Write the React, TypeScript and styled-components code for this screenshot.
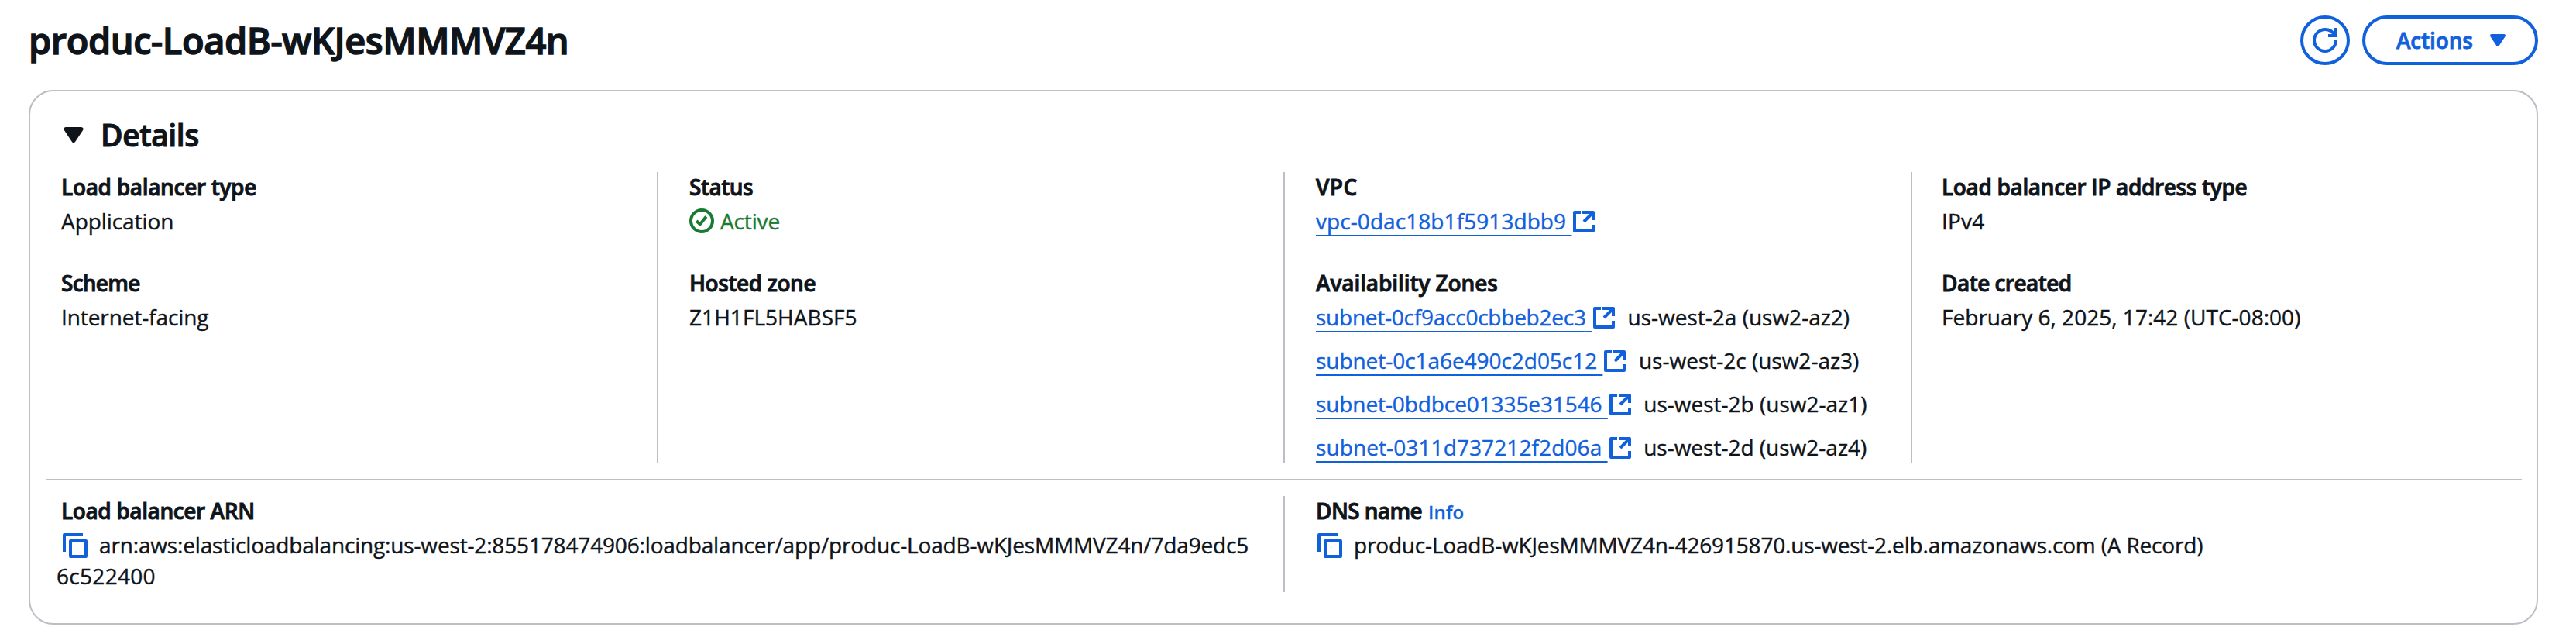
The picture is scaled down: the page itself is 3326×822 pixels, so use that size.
import React from "react";
import styled, { createGlobalStyle } from "styled-components";

const ink = "#0f141a";
const blue = "#1160dc";
const green = "#1a7a33";
const line = "#bdbdc6";

const GlobalStyle = createGlobalStyle`
  *, *::before, *::after { box-sizing: border-box; }
  body {
    margin: 0;
    background: #fff;
    color: ${ink};
    font-family: "Open Sans", "Noto Sans", sans-serif;
    font-size: 28px;
    -webkit-text-stroke: 0.4px;
  }
`;

const Page = styled.main`
  width: 3326px;
  height: 822px;
  padding: 20px 49px 16px 37px;
  background: #fff;
`;

const Header = styled.header`
  display: flex;
  align-items: center;
  height: 64px;
  margin-bottom: 32px;
`;

const Title = styled.h1`
  flex: 1;
  margin: 0;
  font-size: 47px;
  font-weight: 600;
  line-height: 64px;
  letter-spacing: -0.43px;
  -webkit-text-stroke: 1.4px;
`;

const Button = styled.button<{ $round?: boolean }>`
  display: flex;
  align-items: center;
  justify-content: ${(p) => (p.$round ? "center" : "space-between")};
  width: ${(p) => (p.$round ? 64 : 227)}px;
  height: 64px;
  margin-left: 16px;
  padding: ${(p) => (p.$round ? "0" : "0 32px 0 40px")};
  border: 4px solid ${blue};
  border-radius: 32px;
  background: #fff;
  color: ${blue};
  font: 600 28px/38px "Open Sans", "Noto Sans", sans-serif;
  letter-spacing: -0.15px;
  -webkit-text-stroke: 0.8px;
`;

const Icon = styled.svg<{ $size?: number }>`
  flex: none;
  width: ${(p) => p.$size ?? 32}px;
  height: ${(p) => p.$size ?? 32}px;
  fill: none;
  stroke: currentColor;
  stroke-width: 2;
`;

const InlineIcon = styled(Icon)`
  display: inline-block;
  vertical-align: -6px;
`;

const Card = styled.section`
  height: 690px;
  padding: 29px 19px 0 20px;
  border: 2px solid ${line};
  border-radius: 32px;
`;

const CardHeader = styled.div`
  display: flex;
  align-items: center;
  gap: 15px;
  height: 53px;
  margin-bottom: 22px;
  padding-left: 16px;
`;

const CardTitle = styled.h2`
  margin: 0;
  font-size: 39px;
  font-weight: 600;
  line-height: 53px;
  letter-spacing: -0.45px;
  -webkit-text-stroke: 1.1px;
`;

const Columns = styled.div<{ $columns: string; $height: number }>`
  display: grid;
  grid-template-columns: ${(p) => p.$columns};
  height: ${(p) => p.$height}px;
`;

const Column = styled.div`
  display: flex;
  flex-direction: column;
  gap: 41px;
  padding-left: 40px;
  border-left: 2px solid ${line};

  &:first-child {
    padding-left: 20px;
    border-left: 0;
  }

  &:nth-child(4) {
    padding-left: 38px;
  }
`;

const Label = styled.div<{ $spacing: number }>`
  margin-bottom: 5px;
  font-weight: 600;
  line-height: 38px;
  letter-spacing: ${(p) => p.$spacing}px;
  white-space: nowrap;
  -webkit-text-stroke: 0.9px;
`;

const Value = styled.div<{ $spacing?: number }>`
  line-height: 40px;
  letter-spacing: ${(p) => p.$spacing ?? 0}px;
  white-space: nowrap;
`;

const Status = styled.span`
  display: flex;
  align-items: center;
  gap: 8px;
  color: ${green};
`;

const List = styled.div`
  display: flex;
  flex-direction: column;
  gap: 16px;
`;

const Link = styled.a`
  color: ${blue};
`;

const LinkText = styled.span<{ $spacing: number }>`
  letter-spacing: ${(p) => p.$spacing}px;
  text-decoration: underline;
  text-decoration-thickness: 2px;
  text-underline-offset: 7px;
  text-decoration-skip-ink: none;
  white-space: pre;
`;

const Rule = styled.hr`
  height: 2px;
  margin: 20px 0;
  border: 0;
  background: ${line};
`;

const CopyValue = styled.div<{ $spacing: number }>`
  width: 1545px;
  margin-left: -6px;
  line-height: 40px;
  letter-spacing: ${(p) => p.$spacing}px;
  word-break: break-all;

  svg {
    margin: 0 15px 0 8px;
    color: ${blue};
  }
`;

const Tail = styled.span`
  letter-spacing: 0.3px;
`;

const Info = styled.a`
  margin-left: 8px;
  color: ${blue};
  font-size: 24px;
  line-height: 1;
  letter-spacing: 0.1px;
  -webkit-text-stroke: 0.3px;
`;

const caret = <path d="m8 11 4-6H4l4 6z" fill="currentColor" strokeLinejoin="round" />;

const CopyIcon = () => (
  <InlineIcon viewBox="0 0 16 16" strokeLinejoin="round">
    <path d="M13 1H1v11" />
    <path d="M5 5h10v10H5z" />
  </InlineIcon>
);

function ExternalLink({ text, spacing }: { text: string; spacing: number }) {
  return (
    <Link>
      <LinkText $spacing={spacing}>{text}</LinkText>
      <LinkText $spacing={0}> </LinkText>
      <InlineIcon viewBox="0 0 16 16" strokeLinejoin="round">
        <path d="M6 2H2v12h12v-4" />
        <path d="M7 2h7v5M14 2 8 8" />
      </InlineIcon>
    </Link>
  );
}

const subnets = [
  { id: "subnet-0cf9acc0cbbeb2ec3", zone: "us-west-2a (usw2-az2)", spacing: -0.24 },
  { id: "subnet-0c1a6e490c2d05c12", zone: "us-west-2c (usw2-az3)", spacing: -0.05 },
  { id: "subnet-0bdbce01335e31546", zone: "us-west-2b (usw2-az1)", spacing: -0.1 },
  { id: "subnet-0311d737212f2d06a", zone: "us-west-2d (usw2-az4)", spacing: 0.1 },
];

export default function App() {
  return (
    <Page>
      <GlobalStyle />
      <Header>
        <Title>produc-LoadB-wKJesMMMVZ4n</Title>
        <Button $round aria-label="Refresh">
          <Icon viewBox="0 0 16 16">
            <path d="M15 8c0 3.87-3.13 7-7 7s-7-3.13-7-7 3.13-7 7-7c2.79 0 5.2 1.63 6.33 4" />
            <path d="M10 5h5V0" />
          </Icon>
        </Button>
        <Button>
          Actions
          <Icon viewBox="0 0 16 16">{caret}</Icon>
        </Button>
      </Header>

      <Card>
        <CardHeader>
          <Icon $size={40} viewBox="0 0 16 16">{caret}</Icon>
          <CardTitle>Details</CardTitle>
        </CardHeader>

        <Columns $columns="789px 809px 810px 1fr" $height={376}>
          <Column>
            <div>
              <Label $spacing={-0.32}>Load balancer type</Label>
              <Value $spacing={-0.08}>Application</Value>
            </div>
            <div>
              <Label $spacing={-0.75}>Scheme</Label>
              <Value $spacing={-0.1}>Internet-facing</Value>
            </div>
          </Column>
          <Column>
            <div>
              <Label $spacing={-0.5}>Status</Label>
              <Value $spacing={-0.15}>
                <Status>
                  <Icon viewBox="0 0 16 16">
                    <circle cx="8" cy="8" r="7" />
                    <path d="m4.6 8 2.3 2.2 4-4.9" />
                  </Icon>
                  Active
                </Status>
              </Value>
            </div>
            <div>
              <Label $spacing={-0.45}>Hosted zone</Label>
              <Value $spacing={0.05}>Z1H1FL5HABSF5</Value>
            </div>
          </Column>
          <Column>
            <div>
              <Label $spacing={0.4}>VPC</Label>
              <Value>
                <ExternalLink text="vpc-0dac18b1f5913dbb9" spacing={0.07} />
              </Value>
            </div>
            <div>
              <Label $spacing={-0.09}>Availability Zones</Label>
              <List>
                {subnets.map((s) => (
                  <Value key={s.id}>
                    <ExternalLink text={s.id} spacing={s.spacing} />
                    {"\u00a0\u00a0"}
                    {s.zone}
                  </Value>
                ))}
              </List>
            </div>
          </Column>
          <Column>
            <div>
              <Label $spacing={-0.36}>Load balancer IP address type</Label>
              <Value $spacing={0.2}>IPv4</Value>
            </div>
            <div>
              <Label $spacing={-0.55}>Date created</Label>
              <Value $spacing={0.03}>February 6, 2025, 17:42 (UTC-08:00)</Value>
            </div>
          </Column>
        </Columns>

        <Rule />

        <Columns $columns="1598px 1fr" $height={124}>
          <Column>
            <div>
              <Label $spacing={-0.4}>Load balancer ARN</Label>
              <CopyValue $spacing={-0.16}>
                <CopyIcon />
                arn:aws:elasticloadbalancing:us-west-2:855178474906:loadbalancer/app/produc-LoadB-wKJesMMMVZ4n/7da9edc5
                <Tail>6c522400</Tail>
              </CopyValue>
            </div>
          </Column>
          <Column>
            <div>
              <Label $spacing={-0.62}>
                DNS name
                <Info>Info</Info>
              </Label>
              <CopyValue $spacing={-0.18}>
                <CopyIcon />
                produc-LoadB-wKJesMMMVZ4n-426915870.us-west-2.elb.amazonaws.com (A Record)
              </CopyValue>
            </div>
          </Column>
        </Columns>
      </Card>
    </Page>
  );
}
